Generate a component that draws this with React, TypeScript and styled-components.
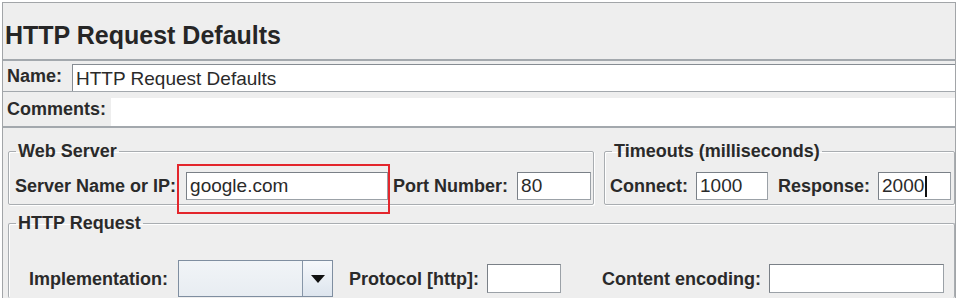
import React from "react";
import styled, { createGlobalStyle } from "styled-components";

const GlobalStyle = createGlobalStyle`
  html, body { margin: 0; padding: 0; background: #ffffff; }
  body { font-family: "Liberation Sans", Arial, sans-serif; color: #2a2a2a; }
  #root { width: 959px; height: 301px; overflow: hidden; }
`;

const Page = styled.div`
  width: 959px;
  height: 301px;
  box-sizing: border-box;
  padding: 2px 3px 3px 2px;
  background: #ffffff;
`;

const Frame = styled.div`
  height: 100%;
  box-sizing: border-box;
  border: 1px solid #a2a5a8;
  border-bottom: none;
  background: #eeeeee;
  display: flex;
  flex-direction: column;
  overflow: hidden;
`;

const Title = styled.div`
  height: 56px;
  box-sizing: border-box;
  padding: 18px 0 0 2px;
  font-size: 25px;
  line-height: 28px;
  font-weight: 700;
  color: #262626;
`;

const NameBlock = styled.div`
  border-top: 2px solid #a3a8ad;
  border-bottom: 2px solid #a3a8ad;
  display: flex;
  flex-direction: column;
`;

const NameRow = styled.div<{ $h: number; $divider?: boolean }>`
  height: ${(p) => p.$h}px;
  box-sizing: border-box;
  display: flex;
  align-items: flex-end;
  padding-left: 4px;
  border-bottom: ${(p) => (p.$divider ? "1px solid #a3a8ad" : "none")};
`;

const Label = styled.span<{ $gap?: number; $lead?: number }>`
  font-size: 18px;
  font-weight: 700;
  line-height: 22px;
  color: #2a2a2a;
  white-space: nowrap;
  flex: none;
  margin-left: ${(p) => p.$lead ?? 0}px;
  margin-right: ${(p) => p.$gap ?? 8}px;
`;

const NameLabel = styled(Label)`
  align-self: center;
`;

const NameField = styled.div`
  flex: 1;
  height: 27px;
  box-sizing: border-box;
  background: #ffffff;
  border-top: 1px solid #868c93;
  border-left: 1px solid #868c93;
  padding-left: 3px;
  font-size: 19px;
  line-height: 27px;
  color: #2a2a2a;
`;

const CommentsArea = styled.div`
  flex: 1;
  height: 28px;
  background: #ffffff;
`;

const Main = styled.div`
  flex: 1;
  display: flex;
  flex-direction: column;
  padding-left: 5px;
`;

const TopRow = styled.div`
  display: flex;
  margin-top: 13px;
  gap: 10px;
`;

const Group = styled.fieldset<{ $w?: number; $pt: number; $pb: number; $pl: number }>`
  margin: 0;
  min-width: 0;
  box-sizing: border-box;
  ${(p) => (p.$w ? `width: ${p.$w}px; flex: none;` : "flex: 1;")}
  border: 1px solid #a9adb1;
  border-radius: 2px;
  box-shadow: inset 1px 1px 0 #ffffff, 1px 1px 0 #ffffff;
  padding: ${(p) => p.$pt}px 0 ${(p) => p.$pb}px ${(p) => p.$pl}px;
  display: flex;
  align-items: center;
`;

const Legend = styled.legend<{ $ml: number }>`
  margin-left: ${(p) => p.$ml}px;
  padding: 0 2px;
  font-size: 18px;
  font-weight: 700;
  line-height: 20px;
  color: #2a2a2a;
`;

const Field = styled.div<{ $w: number; $h?: number }>`
  width: ${(p) => p.$w}px;
  height: ${(p) => p.$h ?? 28}px;
  box-sizing: border-box;
  background: #ffffff;
  border: 1px solid #9ba1a7;
  border-top-color: #7a8087;
  border-left-color: #7a8087;
  padding-left: 3px;
  font-size: 19px;
  line-height: 26px;
  color: #2a2a2a;
  flex: none;
  display: flex;
  align-items: center;
`;

const Caret = styled.span`
  display: inline-block;
  width: 0;
  height: 21px;
  border-left: 2px solid #111;
  margin-left: 1px;
`;

const Highlight = styled.div`
  position: relative;
  flex: none;
`;

const RedBox = styled.div`
  position: absolute;
  left: -9px;
  right: -2px;
  top: -8px;
  bottom: -14px;
  border: 2px solid #e3262c;
  pointer-events: none;
`;

const RequestGroup = styled(Group)`
  margin-top: 8px;
  flex: 1;
  align-items: flex-start;
  border-bottom: none;
`;

const RequestRow = styled.div`
  display: flex;
  align-items: center;
  padding-left: 20px;
`;

const Combo = styled.div`
  width: 155px;
  height: 37px;
  box-sizing: border-box;
  border: 1px solid #7f8ea0;
  background: linear-gradient(#f1f4f7, #e8edf2);
  display: flex;
  justify-content: flex-end;
  flex: none;
`;

const ComboButton = styled.div`
  width: 29px;
  border-left: 1px solid #8796a8;
  background: linear-gradient(#f6f8fb, #dde5ee);
  display: flex;
  align-items: center;
  justify-content: center;
`;

export default function App() {
  return (
    <>
      <GlobalStyle />
      <Page>
        <Frame>
          <Title>HTTP Request Defaults</Title>
          <NameBlock>
            <NameRow $h={31} $divider>
              <NameLabel $gap={10}>Name:</NameLabel>
              <NameField>HTTP Request Defaults</NameField>
            </NameRow>
            <NameRow $h={34}>
              <NameLabel $gap={5}>Comments:</NameLabel>
              <CommentsArea />
            </NameRow>
          </NameBlock>
          <Main>
            <TopRow>
              <Group $w={586} $pt={11} $pb={4} $pl={6}>
                <Legend $ml={1}>Web Server</Legend>
                <Label $gap={10}>Server Name or IP:</Label>
                <Highlight>
                  <Field $w={202}>google.com</Field>
                  <RedBox />
                </Highlight>
                <Label $lead={5} $gap={9}>Port Number:</Label>
                <Field $w={74}>80</Field>
              </Group>
              <Group $pt={11} $pb={4} $pl={5}>
                <Legend $ml={2}>Timeouts (milliseconds)</Legend>
                <Label>Connect:</Label>
                <Field $w={72}>1000</Field>
                <Label $lead={10}>Response:</Label>
                <Field $w={73}>
                  2000
                  <Caret />
                </Field>
              </Group>
            </TopRow>
            <RequestGroup $pt={27} $pb={0} $pl={0}>
              <Legend $ml={7}>HTTP Request</Legend>
              <RequestRow>
                <Label $gap={10}>Implementation:</Label>
                <Combo>
                  <ComboButton>
                    <svg width="14" height="8" viewBox="0 0 14 8">
                      <path d="M0 0 H14 L7 8 Z" fill="#111" />
                    </svg>
                  </ComboButton>
                </Combo>
                <Label $lead={16}>Protocol [http]:</Label>
                <Field $w={74} $h={29} />
                <Label $lead={41}>Content encoding:</Label>
                <Field $w={175} $h={29} />
              </RequestRow>
            </RequestGroup>
          </Main>
        </Frame>
      </Page>
    </>
  );
}
